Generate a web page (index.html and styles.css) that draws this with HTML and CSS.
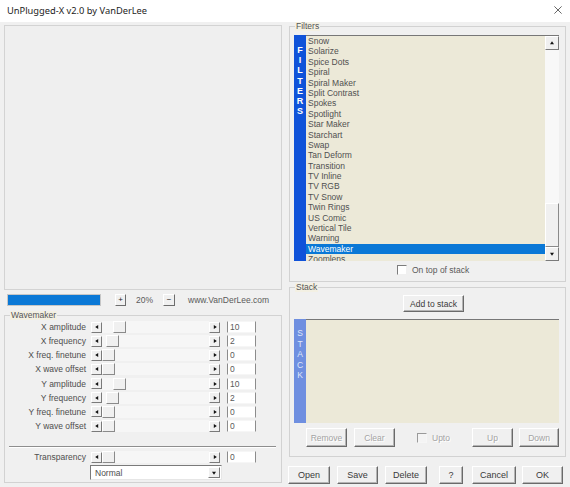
FILE: index.html
```html
<!DOCTYPE html>
<html lang="en">
<head>
  <meta charset="UTF-8" />
  <title>UnPlugged-X v2.0 by VanDerLee</title>
  <link rel="stylesheet" href="styles.css">
</head>
<body>
<div class="window">
  <div class="titleBar">
    <span class="title">UnPlugged-X v2.0 by VanDerLee</span>
    <svg class="closeIcon" viewBox="0 0 10 10">
      <path d="M0.5 0.5 L9.5 9.5 M9.5 0.5 L0.5 9.5" stroke="#2b2b2b" stroke-width="0.9" fill="none" />
    </svg>
  </div>

  <div class="main">
    <div class="leftCol">
      <div class="preview"></div>

      <div class="zoomRow">
        <div class="progress"></div>
        <div class="tinyBtn">+</div>
        <span class="zoomPct">20%</span>
        <div class="tinyBtn">&minus;</div>
        <span class="siteUrl">www.VanDerLee.com</span>
      </div>

      <fieldset class="group wavemaker">
        <legend>Wavemaker</legend>
        <div class="sliderRow">
          <span class="sliderLabel">X amplitude</span>
          <div class="slider">
            <div class="arrowBtn left"></div>
            <div class="track"><div class="thumb" style="margin-left:11px"></div></div>
            <div class="arrowBtn right"></div>
          </div>
          <div class="valueBox">10</div>
        </div>
        <div class="sliderRow">
          <span class="sliderLabel">X frequency</span>
          <div class="slider">
            <div class="arrowBtn left"></div>
            <div class="track"><div class="thumb" style="margin-left:4px"></div></div>
            <div class="arrowBtn right"></div>
          </div>
          <div class="valueBox">2</div>
        </div>
        <div class="sliderRow">
          <span class="sliderLabel">X freq. finetune</span>
          <div class="slider">
            <div class="arrowBtn left"></div>
            <div class="track"><div class="thumb" style="margin-left:0"></div></div>
            <div class="arrowBtn right"></div>
          </div>
          <div class="valueBox">0</div>
        </div>
        <div class="sliderRow">
          <span class="sliderLabel">X wave offset</span>
          <div class="slider">
            <div class="arrowBtn left"></div>
            <div class="track"><div class="thumb" style="margin-left:0"></div></div>
            <div class="arrowBtn right"></div>
          </div>
          <div class="valueBox">0</div>
        </div>
        <div class="sliderRow">
          <span class="sliderLabel">Y amplitude</span>
          <div class="slider">
            <div class="arrowBtn left"></div>
            <div class="track"><div class="thumb" style="margin-left:11px"></div></div>
            <div class="arrowBtn right"></div>
          </div>
          <div class="valueBox">10</div>
        </div>
        <div class="sliderRow">
          <span class="sliderLabel">Y frequency</span>
          <div class="slider">
            <div class="arrowBtn left"></div>
            <div class="track"><div class="thumb" style="margin-left:4px"></div></div>
            <div class="arrowBtn right"></div>
          </div>
          <div class="valueBox">2</div>
        </div>
        <div class="sliderRow">
          <span class="sliderLabel">Y freq. finetune</span>
          <div class="slider">
            <div class="arrowBtn left"></div>
            <div class="track"><div class="thumb" style="margin-left:0"></div></div>
            <div class="arrowBtn right"></div>
          </div>
          <div class="valueBox">0</div>
        </div>
        <div class="sliderRow">
          <span class="sliderLabel">Y wave offset</span>
          <div class="slider">
            <div class="arrowBtn left"></div>
            <div class="track"><div class="thumb" style="margin-left:0"></div></div>
            <div class="arrowBtn right"></div>
          </div>
          <div class="valueBox">0</div>
        </div>

        <div class="separator"></div>

        <div class="sliderRow transparencyRow">
          <span class="sliderLabel">Transparency</span>
          <div class="slider">
            <div class="arrowBtn left"></div>
            <div class="track"><div class="thumb" style="margin-left:0"></div></div>
            <div class="arrowBtn right"></div>
          </div>
          <div class="valueBox">0</div>
        </div>

        <div class="blendSelect">
          <span>Normal</span>
          <div class="arrowBtn down"></div>
        </div>
      </fieldset>
    </div>

    <div class="rightCol">
      <fieldset class="group filters">
        <legend>Filters</legend>
        <div class="listBox filterBox">
          <div class="sideStrip filtersStrip">
            <span>F</span><span>I</span><span>L</span><span>T</span><span>E</span><span>R</span><span>S</span>
          </div>
          <div class="listArea">
            <ul class="filterList">
              <li>Snow</li>
              <li>Solarize</li>
              <li>Spice Dots</li>
              <li>Spiral</li>
              <li>Spiral Maker</li>
              <li>Split Contrast</li>
              <li>Spokes</li>
              <li>Spotlight</li>
              <li>Star Maker</li>
              <li>Starchart</li>
              <li>Swap</li>
              <li>Tan Deform</li>
              <li>Transition</li>
              <li>TV Inline</li>
              <li>TV RGB</li>
              <li>TV Snow</li>
              <li>Twin Rings</li>
              <li>US Comic</li>
              <li>Vertical Tile</li>
              <li>Warning</li>
              <li class="selected">Wavemaker</li>
              <li>Zoomlens</li>
            </ul>
            <div class="scrollBar">
              <div class="arrowBtn up scrollBtn"></div>
              <div class="scrollTrack"><div class="scrollThumb"></div></div>
              <div class="arrowBtn down scrollBtn"></div>
            </div>
          </div>
        </div>
        <label class="checkRow onTop">
          <span class="checkBox"></span>
          On top of stack
        </label>
      </fieldset>

      <fieldset class="group stack">
        <legend>Stack</legend>
        <div class="btn addBtn">Add to stack</div>
        <div class="listBox stackBox">
          <div class="sideStrip stackStrip">
            <span>S</span><span>T</span><span>A</span><span>C</span><span>K</span>
          </div>
          <div class="listArea stackArea"></div>
        </div>
        <div class="stackButtons">
          <div class="btn disabled removeBtn">Remove</div>
          <div class="btn disabled clearBtn">Clear</div>
          <label class="checkRow upto">
            <span class="checkBox disabledBox"></span>
            <span class="disabledText">Upto</span>
          </label>
          <div class="btn disabled upBtn">Up</div>
          <div class="btn disabled downBtn">Down</div>
        </div>
      </fieldset>

      <div class="dialogButtons">
        <div class="btn openBtn">Open</div>
        <div class="btn saveBtn">Save</div>
        <div class="btn deleteBtn">Delete</div>
        <div class="btn helpBtn">?</div>
        <div class="btn cancelBtn">Cancel</div>
        <div class="btn okBtn">OK</div>
      </div>
    </div>
  </div>
</div>
</body>
</html>
```

FILE: styles.css
```css
* { margin: 0; padding: 0; box-sizing: border-box; }
html, body {
  width: 570px;
  height: 487px;
  overflow: hidden;
  background-color: #f0f0f0;
  font-family: "Liberation Sans", Arial, sans-serif;
  font-size: 8.5px;
  color: #4e4e4e;
}
.window {
  width: 570px;
  height: 487px;
}

/* title bar */
.titleBar {
  height: 22px;
  background: #fff;
  display: flex;
  align-items: center;
  justify-content: space-between;
  padding: 0 8px 2px 7px;
}
.titleBar .title {
  font-family: "Noto Sans", "Open Sans", sans-serif;
  font-size: 9.3px;
  color: #1c1c1c;
}
.closeIcon {
  width: 8px;
  height: 8px;
}

.main {
  display: flex;
  gap: 7px;
  padding-left: 4px;
}
.leftCol {
  width: 278px;
  padding-top: 3px;
  display: flex;
  flex-direction: column;
}
.rightCol {
  width: 277px;
  display: flex;
  flex-direction: column;
}

/* preview + zoom */
.preview {
  height: 265px;
  border: 1px solid #d3d3d3;
  background: #efefef;
}
.zoomRow {
  height: 14px;
  margin-top: 3px;
  display: flex;
  align-items: center;
}
.progress {
  margin-left: 3px;
  width: 94px;
  height: 12px;
  border: 1px solid #c6c6c6;
  background: #0a78d6;
}
.tinyBtn {
  width: 11px;
  height: 12px;
  margin-left: 14px;
  display: flex;
  align-items: center;
  justify-content: center;
  font-size: 8px;
  line-height: 1;
  color: #222;
  background: #f0f0f0;
  border: 1px solid;
  border-color: #fff #6d6d6d #6d6d6d #fff;
}
.zoomPct {
  width: 37px;
  text-align: center;
  color: #5a5a5a;
}
.zoomPct + .tinyBtn {
  margin-left: 0;
  width: 12px;
}
.siteUrl {
  margin-left: 13px;
  color: #5a5a5a;
}

/* group boxes */
.group {
  border: 1px solid #d2d2d2;
  padding: 0;
  min-width: 0;
}
.group legend {
  margin-left: 5px;
  padding: 0 1px;
  line-height: 9px;
  background: #f3f0e3;
  color: #555;
}

/* wavemaker sliders */
.wavemaker {
  margin-top: 4px;
  height: 172px;
}
.sliderRow {
  display: flex;
  align-items: center;
  height: 14.15px;
}
.sliderLabel {
  width: 81px;
  text-align: right;
  white-space: nowrap;
  color: #4e4e4e;
}
.slider {
  display: flex;
  align-items: center;
  margin-left: 5px;
}
.arrowBtn {
  position: relative;
  width: 11px;
  height: 11px;
  background: #f0f0f0;
  border: 1px solid;
  border-color: #fff #7a7a7a #7a7a7a #fff;
}
.arrowBtn::before {
  content: "";
  position: absolute;
  top: 50%;
  left: 50%;
  border: 2.5px solid transparent;
}
.arrowBtn.left::before {
  border-right: 3px solid #111;
  border-left-width: 0;
  transform: translate(-60%, -50%);
}
.arrowBtn.right::before {
  border-left: 3px solid #111;
  border-right-width: 0;
  transform: translate(-40%, -50%);
}
.arrowBtn.up::before {
  border-bottom: 3px solid #111;
  border-top-width: 0;
  transform: translate(-50%, -60%);
}
.arrowBtn.down::before {
  border-top: 3px solid #111;
  border-bottom-width: 0;
  transform: translate(-50%, -40%);
}
.track {
  width: 107px;
  height: 12px;
  background: #f6f6f6;
  display: flex;
}
.thumb {
  width: 13px;
  height: 12px;
  background: #f0f0f0;
  border: 1px solid;
  border-color: #fff #8a8a8a #8a8a8a #fff;
}
.valueBox {
  margin-left: 7px;
  width: 29px;
  height: 12px;
  padding-left: 2px;
  line-height: 10px;
  background: #fff;
  border: 1px solid;
  border-color: #f6f6f6 #8c8c8c #f6f6f6 #8c8c8c;
  color: #5a5a5a;
}
.separator {
  margin: 12.5px 5px 0 4px;
  height: 2px;
  border-top: 1px solid #8e8e8e;
  border-bottom: 1px solid #fff;
}
.transparencyRow {
  margin-top: 2.5px;
}
.blendSelect {
  margin: 1px 0 0 85px;
  width: 132px;
  height: 15px;
  display: flex;
  align-items: center;
  justify-content: space-between;
  padding: 0 1px 0 4px;
  background: #fff;
  border: 1px solid;
  border-color: #7a7a7a #e6e6e6 #e6e6e6 #7a7a7a;
  color: #4e4e4e;
}
.blendSelect .arrowBtn {
  width: 12px;
}

/* list boxes */
.listBox {
  display: flex;
  margin-left: 4px;
  width: 265px;
}
.sideStrip {
  width: 12px;
  display: flex;
  flex-direction: column;
  align-items: center;
}
.filterBox {
  margin-top: 4px;
  height: 226px;
}
.filtersStrip {
  background: #0f52d9;
  padding-top: 10px;
  font-weight: bold;
  font-size: 9px;
  line-height: 10.2px;
  color: #fff;
}
.listArea {
  flex: 1;
  display: flex;
  border-top: 1px solid #777;
  background: #ece9d8;
  overflow: hidden;
}
.filterList {
  flex: 1;
  list-style: none;
  overflow: hidden;
}
.filterList li {
  height: 10.4px;
  line-height: 10.4px;
  padding-left: 2px;
  white-space: nowrap;
  color: #505050;
}
.filterList li.selected {
  background: #0a78d6;
  color: #fff;
}
.scrollBar {
  width: 14px;
  display: flex;
  flex-direction: column;
  background: #f8f8f8;
}
.scrollBtn {
  width: 14px;
  height: 14px;
  flex: none;
}
.scrollTrack {
  flex: 1;
  display: flex;
  flex-direction: column;
  justify-content: flex-end;
}
.scrollThumb {
  height: 44px;
  background: #f0f0f0;
  border: 1px solid;
  border-color: #fff #8a8a8a #8a8a8a #fff;
}

/* checkboxes */
.checkRow {
  display: flex;
  align-items: center;
  color: #5a5a5a;
}
.checkBox {
  width: 10px;
  height: 10px;
  margin-right: 5px;
  background: #fff;
  border: 1px solid;
  border-color: #7c7c7c #f0f0f0 #f0f0f0 #7c7c7c;
}
.onTop {
  height: 14px;
  margin: 2px 0 0 107px;
}

/* stack */
.filters {
  height: 260px;
}
.stack {
  margin-top: 1px;
  height: 174px;
}
.btn {
  display: flex;
  align-items: center;
  justify-content: center;
  background: #f0f0f0;
  border: 1px solid;
  border-color: #fff #6a6a6a #6a6a6a #fff;
  box-shadow: inset -1px -1px #b4b4b4;
  color: #3a3a3a;
  white-space: nowrap;
}
.btn.disabled {
  color: #a3a3a3;
  text-shadow: 1px 1px #fff;
}
.addBtn {
  margin: 3px 0 0 113px;
  width: 61px;
  height: 17px;
}
.stackBox {
  margin-top: 7px;
  height: 104px;
}
.stackStrip {
  background: #6f8fe0;
  padding-top: 9px;
  line-height: 10.5px;
  color: #dfe6fb;
}
.stackButtons {
  display: flex;
  align-items: center;
  margin-top: 5px;
  height: 19px;
}
.stackButtons .btn {
  height: 19px;
}
.removeBtn {
  margin-left: 16px;
  width: 41px;
}
.clearBtn {
  margin-left: 7px;
  width: 41px;
}
.upto {
  width: 77px;
  padding-left: 22px;
}
.disabledBox {
  border-color: #9a9a9a #f6f6f6 #f6f6f6 #9a9a9a;
  background: #f4f4f4;
}
.disabledText {
  color: #a3a3a3;
  text-shadow: 1px 1px #fff;
}
.upBtn {
  width: 41px;
}
.downBtn {
  margin-left: 6px;
  width: 40px;
}

/* bottom dialog buttons */
.dialogButtons {
  display: flex;
  margin: 9px 0 0 -1px;
}
.dialogButtons .btn {
  height: 18px;
  font-size: 9px;
}
.openBtn { width: 42px; }
.saveBtn { width: 41px; margin-left: 7px; }
.deleteBtn { width: 42px; margin-left: 7px; }
.helpBtn { width: 24px; margin-left: 12px; }
.cancelBtn { width: 44px; margin-left: 9px; }
.okBtn { width: 41px; margin-left: 6px; }
```
